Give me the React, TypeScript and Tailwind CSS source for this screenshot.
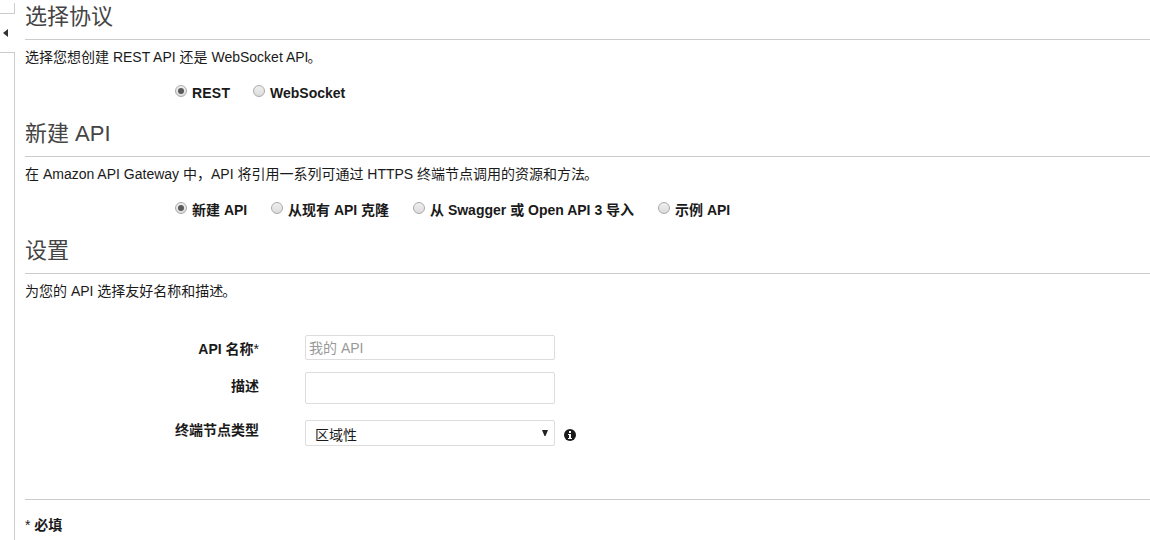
import type { ReactNode } from "react";

function Section({ title, text, children }: { title: string; text: ReactNode; children?: ReactNode }) {
  return (
    <section className={children ? "h-[117px]" : "h-[67px]"}>
      <h2 className="h-[40px] border-b border-[#cccccc] text-[22px] leading-[34px] font-normal text-[#444444]">{title}</h2>
      <p className="mt-[7px] h-[20px] text-[14px] leading-[20px] whitespace-nowrap">{text}</p>
      {children}
    </section>
  );
}

function Stop() {
  return <span className="-ml-px">。</span>;
}

function Radio({ checked, label, width, tracking }: { checked?: boolean; label: string; width: string; tracking?: string }) {
  return (
    <label className={`flex shrink-0 ${width}`}>
      <span className="mt-[2px] flex size-[12px] shrink-0 items-center justify-center rounded-full border border-[#aaaaaa] bg-linear-to-b from-[#efefef] to-[#dcdcdc]">
        {checked && <span className="size-[6px] rounded-full bg-[#5a5a5a]" />}
      </span>
      <span className={`ml-[5px] text-[14px] leading-[20px] font-bold whitespace-nowrap ${tracking ?? ""}`}>{label}</span>
    </label>
  );
}

export default function App() {
  return (
    <div className="flex h-[540px] w-[1150px] overflow-hidden bg-white font-['Liberation_Sans','Noto_Sans_CJK_SC',sans-serif] text-[#1a1a1a]">
      <aside className="flex w-[15px] shrink-0 flex-col">
        <div className="mt-[3px] h-[11px] border-r border-b border-[#cccccc]" />
        <div className="flex h-[38px] items-center pl-[3px]">
          <svg width="5" height="8" viewBox="0 0 5 8" className="fill-[#333333]">
            <path d="M5 0v8L0 4z" />
          </svg>
        </div>
        <div className="flex-1 border-t border-r border-[#cccccc]" />
      </aside>
      <main className="ml-[10px] w-[1125px]">
        <Section title="选择协议" text={<>选择您想创建 REST API 还是 WebSocket API<Stop /></>}>
          <div className="mt-[16px] ml-[150px] flex">
            <Radio checked label="REST" width="w-[78px]" tracking="tracking-[0.2px]" />
            <Radio label="WebSocket" width="w-[100px]" />
          </div>
        </Section>
        <Section title="新建 API" text={<>在 Amazon API Gateway 中，API 将引用一系列可通过 HTTPS 终端节点调用的资源和方法<Stop /></>}>
          <div className="mt-[16px] ml-[150px] flex">
            <Radio checked label="新建 API" width="w-[96px]" />
            <Radio label="从现有 API 克隆" width="w-[142px]" />
            <Radio label="从 Swagger 或 Open API 3 导入" width="w-[245px]" />
            <Radio label="示例 API" width="w-[90px]" />
          </div>
        </Section>
        <Section title="设置" text={<>为您的 API 选择友好名称和描述<Stop /></>} />
        <form className="h-[199px] border-b border-[#cccccc] pt-[34px] text-[14px] leading-[20px]">
          <div className="flex h-[37px]">
            <div className="w-[234px] pt-[4px] text-right font-bold">API 名称<span className="font-normal">*</span></div>
            <input placeholder="我的 API" className="ml-[46px] block h-[25px] w-[250px] rounded-[2px] border border-[#dddddd] px-[3px] leading-[20px] outline-none placeholder:text-[#999999]" />
          </div>
          <div className="flex h-[48px]">
            <div className="w-[234px] pt-[4px] text-right font-bold">描述</div>
            <div className="ml-[46px] h-[32px] w-[250px] rounded-[2px] border border-[#dddddd]" />
          </div>
          <div className="flex">
            <div className="w-[234px] text-right font-bold">终端节点类型</div>
            <div className="ml-[46px] flex h-[26px] w-[250px] justify-between rounded-[2px] border border-[#dddddd] pr-[6px] pl-[9px]">
              <span className="pt-[4px]">区域性</span>
              <svg width="6" height="6" viewBox="0 0 6 6" className="mt-[9px] fill-[#222222]">
                <path d="M0 0h6L3.5 6h-1z" />
              </svg>
            </div>
            <svg width="12" height="12" viewBox="0 0 12 12" className="mt-[9px] ml-[9px]">
              <circle cx="6" cy="6" r="6" fill="#1a1a1a" />
              <path d="M5 2h2v2H5zM4 5h3v4h1v1H4V9h1V6H4z" fill="white" />
            </svg>
          </div>
        </form>
        <div className="pt-[15px] text-[14px] leading-[20px]"><span>* </span><span className="font-bold">必填</span></div>
      </main>
    </div>
  );
}
